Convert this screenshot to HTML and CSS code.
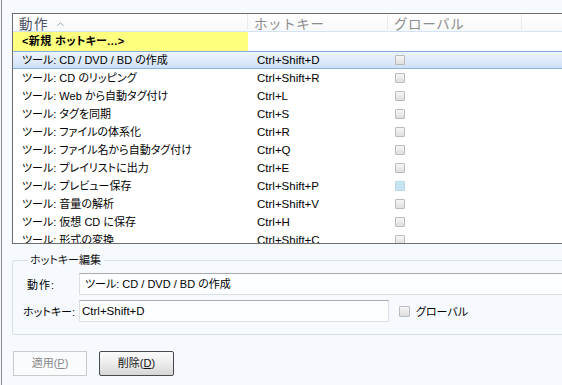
FILE: index.html
```html
<!DOCTYPE html>
<html lang="ja">
<head>
<meta charset="utf-8">
<link rel="stylesheet" href="styles.css">
</head>
<body>
<div class="window">
  <div class="list">
    <div class="row head">
      <div class="c1 sorted">動作<svg class="sort" width="7" height="4" viewBox="0 0 7 4"><path d="M0.5 3.5 L3.5 0.8 L6.5 3.5" fill="none" stroke="#9aa3ad" stroke-width="1"/></svg></div>
      <div class="c2">ホットキー</div>
      <div class="c3">グローバル</div>
      <div class="c4"></div>
    </div>
    <div class="row new"><div class="c1">&lt;新規 ホットキー...&gt;</div></div>
    <div class="row sel"><div class="c1">ツール: CD / DVD / BD の作成</div><div class="c2">Ctrl+Shift+D</div><div class="c3"><span class="cb"></span></div></div>
    <div class="row"><div class="c1">ツール: CD のリッピング</div><div class="c2">Ctrl+Shift+R</div><div class="c3"><span class="cb"></span></div></div>
    <div class="row"><div class="c1">ツール: Web から自動タグ付け</div><div class="c2">Ctrl+L</div><div class="c3"><span class="cb"></span></div></div>
    <div class="row"><div class="c1">ツール: タグを同期</div><div class="c2">Ctrl+S</div><div class="c3"><span class="cb"></span></div></div>
    <div class="row"><div class="c1">ツール: ファイルの体系化</div><div class="c2">Ctrl+R</div><div class="c3"><span class="cb"></span></div></div>
    <div class="row"><div class="c1">ツール: ファイル名から自動タグ付け</div><div class="c2">Ctrl+Q</div><div class="c3"><span class="cb"></span></div></div>
    <div class="row"><div class="c1">ツール: プレイリストに出力</div><div class="c2">Ctrl+E</div><div class="c3"><span class="cb"></span></div></div>
    <div class="row"><div class="c1">ツール: プレビュー保存</div><div class="c2">Ctrl+Shift+P</div><div class="c3"><span class="cb hot"></span></div></div>
    <div class="row"><div class="c1">ツール: 音量の解析</div><div class="c2">Ctrl+Shift+V</div><div class="c3"><span class="cb"></span></div></div>
    <div class="row"><div class="c1">ツール: 仮想 CD に保存</div><div class="c2">Ctrl+H</div><div class="c3"><span class="cb"></span></div></div>
    <div class="row"><div class="c1">ツール: 形式の変換</div><div class="c2">Ctrl+Shift+C</div><div class="c3"><span class="cb"></span></div></div>
  </div>

  <fieldset class="group">
    <legend>ホットキー編集</legend>
    <div class="field">
      <span class="lbl">動作:</span>
      <div class="input wide">ツール: CD / DVD / BD の作成</div>
    </div>
    <div class="field">
      <span class="lbl lbl2">ホットキー:</span>
      <div class="input short">Ctrl+Shift+D</div>
      <span class="cb big"></span>
      <span class="cblabel">グローバル</span>
    </div>
  </fieldset>

  <div class="buttons">
    <div class="btn disabled">適用(<u>P</u>)</div>
    <div class="btn">削除(<u>D</u>)</div>
  </div>
</div>
</body>
</html>
```
FILE: styles.css
```css
html, body {
  margin: 0;
  padding: 0;
  background: #f6faff;
}
body {
  font-family: "Liberation Sans", "Noto Sans CJK JP", sans-serif;
  font-size: 11px;
  color: #000;
  font-feature-settings: "palt";
}
.window {
  margin-left: 1px;
  border-left: 1px solid #8a8a8a;
  height: 385px;
  box-sizing: border-box;
  overflow: hidden;
  padding: 13px 0 0 10px;
}
.list {
  width: 600px;
  height: 231px;
  box-sizing: border-box;
  border: 1px solid #6e6e6e;
  background: #ffffff;
  overflow: hidden;
}
.row {
  display: grid;
  grid-template-columns: 235px 140px 134px 1fr;
  height: 18px;
  line-height: 18px;
  white-space: nowrap;
}
.row .c1, .row .c2 {
  padding-left: 9px;
}
.row .c2 {
  font-size: 11.5px;
}
.row .c3 {
  padding-left: 7px;
  display: flex;
  align-items: center;
}
.head {
  box-sizing: border-box;
  background: linear-gradient(#ffffff, #f8f9fa);
  border-bottom: 1px solid #d3e2f4;
  font-family: "Noto Sans CJK JP", sans-serif;
  font-feature-settings: normal;
  font-size: 13.5px;
  letter-spacing: 0.6px;
  color: #8c8c8c;
}
.head > div {
  border-right: 1px solid #ececec;
  line-height: 17px;
  padding-top: 1px;
}
.row.head .c1 {
  padding-left: 6px;
  color: #4a5260;
  display: flex;
  align-items: center;
  gap: 8px;
  letter-spacing: 1.5px;
}
.row.head .c2 { padding-left: 6px; font-size: 13.5px; }
.row.head .c3 { padding-left: 6px; display: block; }
.head .c4 { border-right: none; }
.sort { margin-top: 1px; }
.new {
  height: 19px;
  line-height: 19px;
  font-weight: bold;
  letter-spacing: 0.4px;
}
.new .c1 {
  background: #ffff80;
}
.sel {
  box-sizing: border-box;
  border-top: 1px solid #84abdc;
  border-bottom: 1px solid #8cb3e2;
  background: linear-gradient(#edf4fd, #cfe1f7);
  line-height: 16px;
}
.cb {
  display: inline-block;
  width: 10px;
  height: 10px;
  box-sizing: border-box;
  border: 1px solid #bcbcbc;
  border-radius: 1px;
  background: linear-gradient(#f6f6f6, #dedede);
}
.cb.hot {
  border-color: #b9d8ea;
  background: #c8e4f3;
}
.group {
  margin: 9px 0 0 0;
  width: 600px;
  box-sizing: border-box;
  border: 1px solid #d6dee6;
  border-radius: 3px;
  padding: 6px 0 12px 14px;
}
.group legend {
  padding: 0 3px;
  line-height: 14px;
  font-size: 11px;
  color: #111;
}
.field {
  display: flex;
  align-items: center;
  height: 22px;
}
.field + .field {
  margin-top: 5px;
}
.lbl {
  width: 52px;
  flex: none;
  letter-spacing: 1px;
}
.lbl2 {
  margin-left: -4px;
  width: 56px;
  letter-spacing: 0;
}
.input {
  box-sizing: border-box;
  height: 22px;
  line-height: 20px;
  padding-left: 5px;
  border: 1px solid #dcdfe3;
  border-top-color: #a9abae;
  background: #fdfeff;
  white-space: nowrap;
}
.input.wide { width: 520px; }
.input.short { width: 310px; padding-left: 2px; font-size: 11.5px; }
.cb.big {
  width: 11px;
  height: 11px;
  margin-left: 10px;
}
.cblabel {
  margin-left: 6px;
}
.buttons {
  display: flex;
  gap: 12px;
  margin: 16px 0 0 1px;
}
.btn {
  box-sizing: border-box;
  width: 74px;
  height: 25px;
  line-height: 23px;
  text-align: center;
  border: 1px solid #4a4a4a;
  border-radius: 2px;
  background: linear-gradient(#fbfbfb, #ececec 50%, #d6d6d6);
  color: #111;
}
.btn + .btn { width: 75px; }
.btn.disabled {
  border-color: #cacaca;
  border-radius: 0;
  background: #fafbfc;
  color: #8a8a8a;
}
```
